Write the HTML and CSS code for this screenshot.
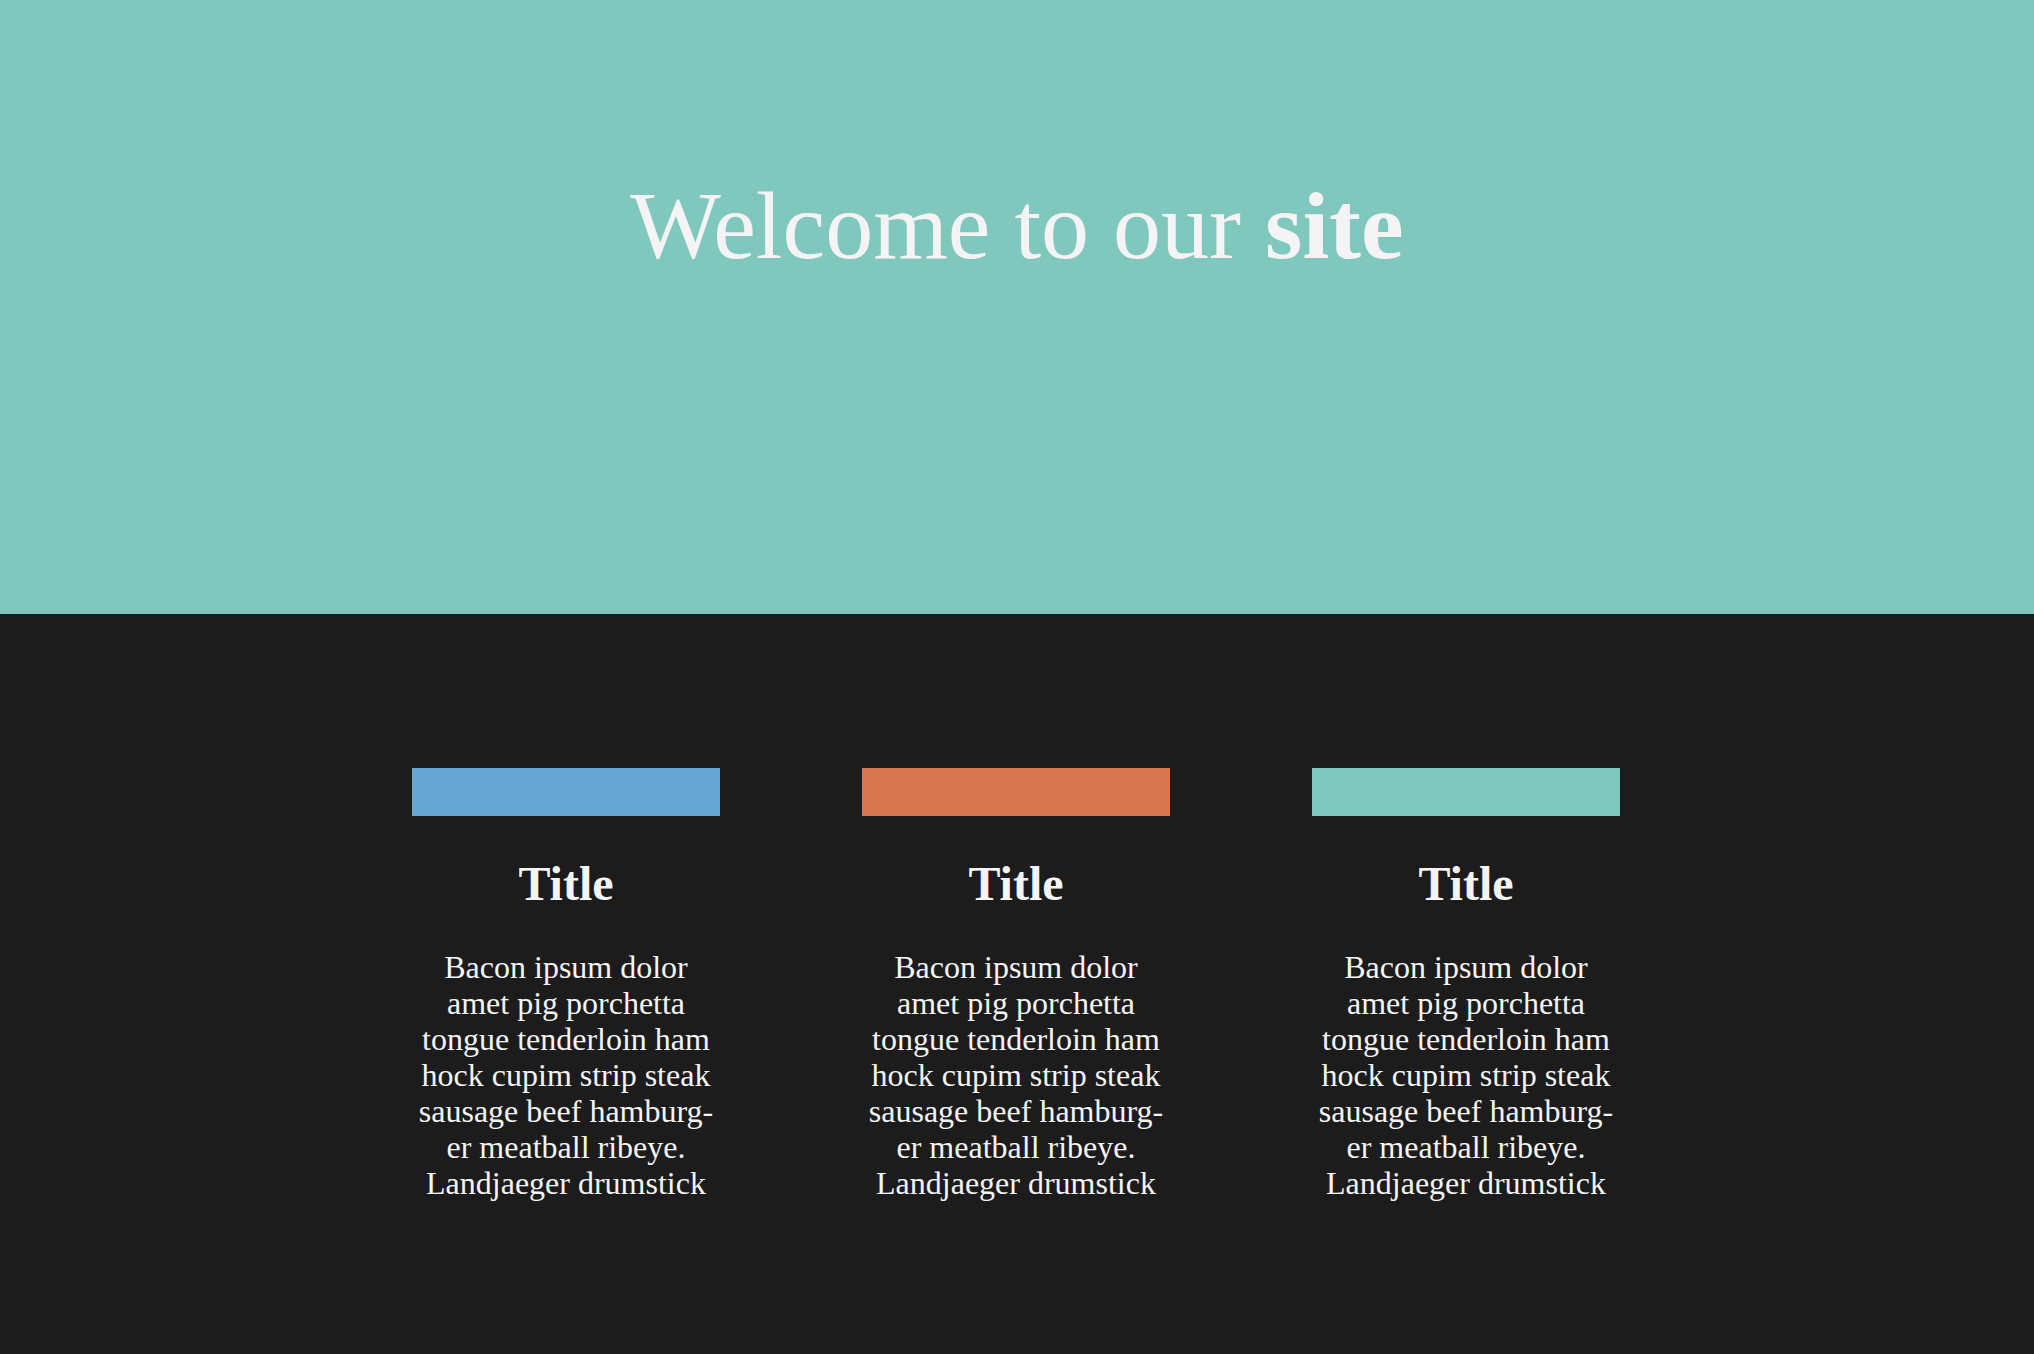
FILE: index.html
```html
<!DOCTYPE html>
<html lang="en">
<head>
<meta charset="utf-8">
<title>Welcome</title>
<link rel="stylesheet" href="styles.css">
</head>
<body>
<header class="hero">
  <h1 class="hero-title">Welcome to our <strong>site</strong></h1>
</header>
<section class="features">
  <div class="feature">
    <div class="feature-bar bar-blue"></div>
    <h2 class="feature-title">Title</h2>
    <p class="feature-text">Bacon ipsum dolor amet pig porchetta tongue tenderloin ham hock cupim strip steak sausage beef hamburg&shy;er meatball ribeye. Landjaeger drumstick</p>
  </div>
  <div class="feature">
    <div class="feature-bar bar-orange"></div>
    <h2 class="feature-title">Title</h2>
    <p class="feature-text">Bacon ipsum dolor amet pig porchetta tongue tenderloin ham hock cupim strip steak sausage beef hamburg&shy;er meatball ribeye. Landjaeger drumstick</p>
  </div>
  <div class="feature">
    <div class="feature-bar bar-teal"></div>
    <h2 class="feature-title">Title</h2>
    <p class="feature-text">Bacon ipsum dolor amet pig porchetta tongue tenderloin ham hock cupim strip steak sausage beef hamburg&shy;er meatball ribeye. Landjaeger drumstick</p>
  </div>
</section>
</body>
</html>
```
FILE: styles.css
```css
html {
  background: #1c1c1c;
}
body {
  margin: 0;
  font-family: "Liberation Serif", "Times New Roman", serif;
  color: #f4f4f4;
  background: #1c1c1c;
}
.hero {
  background: #80c8be;
  height: 614px;
  box-sizing: border-box;
  padding-top: 178px;
}
.hero-title {
  margin: 0;
  font-size: 96px;
  line-height: 1;
  font-weight: normal;
  text-align: center;
  color: #f4f4f4;
}
.hero-title strong {
  font-weight: bold;
}
.features {
  display: grid;
  grid-template-columns: repeat(3, 308px);
  column-gap: 142px;
  justify-content: center;
  padding: 154px 2px 120px 0;
}
.feature {
  display: flex;
  flex-direction: column;
  align-items: center;
}
.feature-bar {
  width: 308px;
  height: 48px;
}
.bar-blue { background: #67a6d3; }
.bar-orange { background: #d97652; }
.bar-teal { background: #80c8be; }
.feature-title {
  margin: 44px 0 0;
  font-size: 48px;
  line-height: 1;
  font-weight: bold;
  text-align: center;
}
.feature-text {
  margin: 41px 0 0;
  width: 300px;
  font-size: 32px;
  line-height: 36px;
  text-align: center;
}
```
